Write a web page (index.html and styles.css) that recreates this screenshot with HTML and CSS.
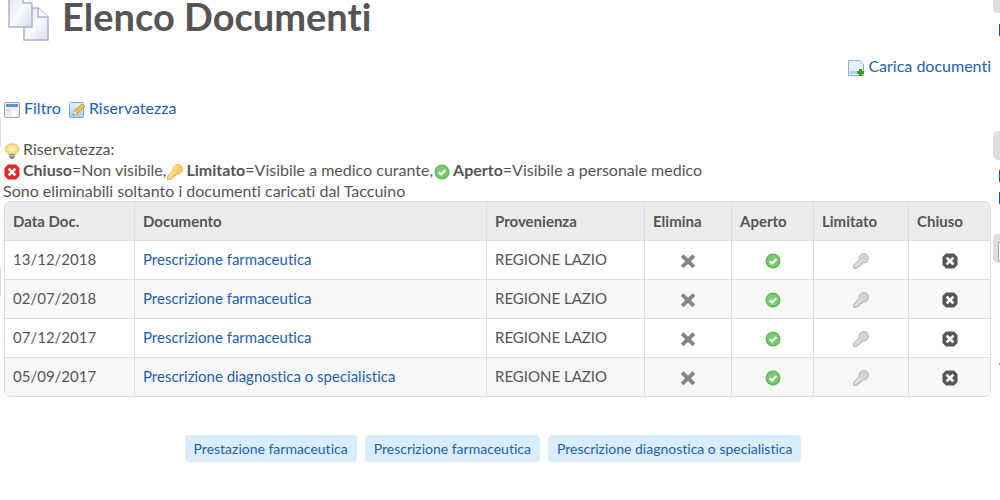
FILE: index.html
```html
<!DOCTYPE html>
<html lang="it">
<head>
  <meta charset="UTF-8">
  <title>Elenco Documenti</title>
  <meta name="viewport" content="width=device-width, initial-scale=1.0">
  <link rel="stylesheet" href="styles.css">
</head>
<body>
  <!-- Icons -->
  <svg class="sprite" aria-hidden="true">
    <defs>
      <linearGradient id="paper" x1="0" y1="0" x2="1" y2="1">
        <stop offset="0" stop-color="#dcdff0"/>
        <stop offset="0.5" stop-color="#fafbff"/>
        <stop offset="1" stop-color="#d6d9ec"/>
      </linearGradient>
      <linearGradient id="sheet" x1="0" y1="0" x2="0" y2="1">
        <stop offset="0" stop-color="#e6f3fd"/>
        <stop offset="1" stop-color="#9fcdf2"/>
      </linearGradient>
      <linearGradient id="gold" x1="0" y1="0" x2="1" y2="1">
        <stop offset="0" stop-color="#fff0a8"/>
        <stop offset="1" stop-color="#f2b632"/>
      </linearGradient>
      <radialGradient id="glow">
        <stop offset="0" stop-color="#fffbd8"/>
        <stop offset="1" stop-color="#f6ce5c"/>
      </radialGradient>
    </defs>
    <symbol id="i-ok" viewBox="0 0 16 16">
      <circle cx="8" cy="8" r="7.5" fill="#5eb956"/>
      <circle cx="8" cy="8" r="6" fill="#7cca73"/>
      <path d="M4.8 8.2l2.3 2.2 4.2-4.3" fill="none" stroke="#fff" stroke-width="2.2"/>
    </symbol>
    <symbol id="i-stop" viewBox="0 0 16 16">
      <path d="M4 .5h8L15.500 4v8L12 15.500H4L.5 12V4z" fill="currentColor"/>
      <path d="M5.500 5.500l5 5M10.500 5.500l-5 5" stroke="#fff" stroke-width="2.600" stroke-linecap="square"/>
    </symbol>
    <symbol id="i-cross" viewBox="0 0 16 16">
      <path d="M3.500 4l9 8.500M12.500 4l-9 8.500" stroke="#858585" stroke-width="3.800" stroke-linecap="square"/>
    </symbol>
    <symbol id="i-key" viewBox="0 0 18 18">
      <path d="M7 7.500C6 4 8.500.8 12 .7c4-.2 6.300 3.500 5.200 6.600-1 2.900-3.700 4.500-6.700 3.700L10 13l-2 .3-.7 2-1.800.2-.7 1.500-4 .5-.3-3.700z" stroke="currentColor" stroke-width="1"/>
      <circle cx="13.200" cy="4.600" r="1.200" fill="#fff" stroke="currentColor" stroke-width=".7"/>
      <path d="M3 14.500l6-5.500" stroke="#fff" stroke-opacity=".6"/>
    </symbol>
  </svg>

  <div class="page">
    <div class="edge edge-left">
      <span class="tab"></span>
      <span class="tab"></span>
    </div>

    <main class="content">
      <header class="title">
        <svg width="48" height="42" viewBox="0 6 48 42" aria-hidden="true">
          <g fill="url(#paper)" stroke="#b0b1cf" stroke-width="1.500">
            <path d="M18 14h14l10 9v23H18z"/>
            <path d="M32 14v9h10" fill="#fff"/>
            <path d="M3 1h14l9 9v23H3z"/>
            <path d="M17 1v8h9" fill="#fff"/>
          </g>
        </svg>
        <h1>Elenco Documenti</h1>
      </header>

      <div class="upload">
        <a href="#"><svg class="icon" viewBox="0 0 16 16" aria-hidden="true">
          <path d="M.5 .5h11l4 4v11H.5z" fill="#e3eff9" stroke="#8fb0d0"/>
          <path d="M2 11h12v3H2z" fill="#a9d4f5"/>
          <path d="M12.500 9v7M9 12.500h7" stroke="#3f9c22" stroke-width="3"/>
        </svg>Carica documenti</a>
      </div>

      <nav class="tools">
        <a href="#"><svg class="icon" viewBox="0 0 16 16" aria-hidden="true">
          <rect x=".5" y=".5" width="15" height="15" rx="1.500" fill="#eee" stroke="#a6a6a6"/>
          <path d="M2 2h12v3H2z" fill="#5b92c9"/>
          <path d="M2 7h4v2H2z" fill="#d2d2d2"/>
          <rect x="8" y="9" width="5" height="5" fill="#fff"/>
        </svg>Filtro</a>
        <a href="#"><svg class="icon" viewBox="0 0 16 16" aria-hidden="true">
          <rect x=".5" y=".5" width="14" height="15" rx="1" fill="url(#sheet)" stroke="#76a9dc"/>
          <path d="M4 13l1-4 8-7 3 2.500-8 7.500z" fill="#f5bd48" stroke="#b98a36" stroke-width=".7"/>
          <path d="M4 13l1-4 3 3z" fill="#fff0d0"/>
          <path d="M4 13l.5-1.500 1 1z" fill="#444"/>
        </svg>Riservatezza</a>
      </nav>

      <div class="legend">
        <div><svg class="icon" viewBox="0 0 16 16" aria-hidden="true">
          <path d="M8 .5a7 5.500 0 0 1 7 5.500c0 3-3 4-4 6H5c-1-2-4-3-4-6A7 5.500 0 0 1 8 .5z" fill="url(#glow)" stroke="#e2bd66" stroke-width=".6"/>
          <path d="M5 11h6v3l-2 2H7l-2-2z" fill="#8b8b8b"/>
          <path d="M5 12.500h6" stroke="#ccc"/>
        </svg>Riservatezza:</div>
        <div><svg class="icon red" aria-hidden="true"><use href="#i-stop"/></svg><strong>Chiuso</strong>=Non visibile,<svg class="icon key" aria-hidden="true"><use href="#i-key"/></svg><strong>Limitato</strong>=Visibile a medico curante,<svg class="icon" aria-hidden="true"><use href="#i-ok"/></svg><strong>Aperto</strong>=Visibile a personale medico</div>
        <div>Sono eliminabili soltanto i documenti caricati dal Taccuino</div>
      </div>

      <table class="docs">
        <colgroup>
          <col class="c-date"><col><col class="c-from"><col class="c-del"><col class="c-open"><col class="c-lim"><col class="c-closed">
        </colgroup>
        <thead>
          <tr><th>Data Doc.</th><th>Documento</th><th>Provenienza</th><th>Elimina</th><th>Aperto</th><th>Limitato</th><th>Chiuso</th></tr>
        </thead>
        <tbody>
          <tr>
            <td>13/12/2018</td>
            <td><a href="#">Prescrizione farmaceutica</a></td>
            <td>REGIONE LAZIO</td>
            <td class="act"><button aria-label="Elimina"><svg><use href="#i-cross"/></svg></button></td>
            <td class="act"><button aria-label="Aperto"><svg><use href="#i-ok"/></svg></button></td>
            <td class="act"><button class="off-key" aria-label="Limitato"><svg><use href="#i-key"/></svg></button></td>
            <td class="act"><button aria-label="Chiuso"><svg><use href="#i-stop"/></svg></button></td>
          </tr>
          <tr>
            <td>02/07/2018</td>
            <td><a href="#">Prescrizione farmaceutica</a></td>
            <td>REGIONE LAZIO</td>
            <td class="act"><button aria-label="Elimina"><svg><use href="#i-cross"/></svg></button></td>
            <td class="act"><button aria-label="Aperto"><svg><use href="#i-ok"/></svg></button></td>
            <td class="act"><button class="off-key" aria-label="Limitato"><svg><use href="#i-key"/></svg></button></td>
            <td class="act"><button aria-label="Chiuso"><svg><use href="#i-stop"/></svg></button></td>
          </tr>
          <tr>
            <td>07/12/2017</td>
            <td><a href="#">Prescrizione farmaceutica</a></td>
            <td>REGIONE LAZIO</td>
            <td class="act"><button aria-label="Elimina"><svg><use href="#i-cross"/></svg></button></td>
            <td class="act"><button aria-label="Aperto"><svg><use href="#i-ok"/></svg></button></td>
            <td class="act"><button class="off-key" aria-label="Limitato"><svg><use href="#i-key"/></svg></button></td>
            <td class="act"><button aria-label="Chiuso"><svg><use href="#i-stop"/></svg></button></td>
          </tr>
          <tr>
            <td>05/09/2017</td>
            <td><a href="#">Prescrizione diagnostica o specialistica</a></td>
            <td>REGIONE LAZIO</td>
            <td class="act"><button aria-label="Elimina"><svg><use href="#i-cross"/></svg></button></td>
            <td class="act"><button aria-label="Aperto"><svg><use href="#i-ok"/></svg></button></td>
            <td class="act"><button class="off-key" aria-label="Limitato"><svg><use href="#i-key"/></svg></button></td>
            <td class="act"><button aria-label="Chiuso"><svg><use href="#i-stop"/></svg></button></td>
          </tr>
        </tbody>
      </table>

      <div class="tags">
        <a href="#">Prestazione farmaceutica</a>
        <a href="#">Prescrizione farmaceutica</a>
        <a href="#">Prescrizione diagnostica o specialistica</a>
      </div>
    </main>

    <!-- side panel, only its edge shows -->
    <div class="edge edge-right">
      <span class="tab tab-top"></span>
      <span class="mark"></span>
      <span class="tab"></span>
      <span class="mark"></span>
      <span class="mark"></span>
      <span class="tab tab-box"></span>
      <span class="dot"></span>
    </div>
  </div>
</body>
</html>
```
FILE: styles.css
```css
* {
  box-sizing: border-box;
}
body {
  margin: 0;
  background: #fff;
  color: #555;
  font-family: Lato, "Liberation Sans", sans-serif;
  font-size: 16px;
  line-height: 21px;
  font-variant-ligatures: none;
}
a {
  color: #1b62ae;
  text-decoration: none;
}
a:hover {
  text-decoration: underline;
}
.sprite {
  position: absolute;
  width: 0;
  height: 0;
}
.page {
  display: grid;
  grid-template-columns: 3px minmax(0, 1fr) 9px;
  overflow: hidden;
}

/* Cut off side panels */
.edge {
  display: flex;
  flex-direction: column;
}
.edge-left {
  padding-top: 118px;
  gap: 120px;
}
.tab {
  height: 29px;
  background: #ddd;
}
.edge-left .tab {
  width: 1px;
}
.edge-right {
  padding-left: 2px;
}
.edge-right .tab {
  flex: none;
  width: 12px;
  border-radius: 5px;
}
.edge-right .tab-top {
  height: 13px;
  margin-bottom: 11px;
  border-radius: 0 0 0 5px;
}
.mark {
  width: 2px;
  height: 12px;
  margin-left: 6px;
  background: #17589f;
}
.mark + .tab {
  margin-top: 95px;
}
.tab + .mark {
  margin-top: 10px;
}
.tab-top + .mark {
  margin-top: 0;
}
.mark + .mark {
  margin-top: 10px;
}
.mark + .tab-box {
  margin-top: 30px;
}
.tab-box::after {
  content: "";
  display: block;
  width: 10px;
  height: 17px;
  margin: 8px 0 0 5px;
  background: #fff;
  border: 1px solid #aaa;
}
.dot {
  width: 1px;
  height: 2px;
  margin: 100px 0 0 6px;
  background: #999;
}

.title {
  display: flex;
  gap: 8px;
  height: 42px;
  padding-left: 3px;
}
.title svg {
  flex: none;
}
h1 {
  margin: 0;
  font-size: 38px;
  line-height: 33px;
  font-weight: bold;
}
.icon {
  width: 16px;
  height: 16px;
  margin: 0 4px 0 1px;
  vertical-align: -4px;
}
.upload {
  margin-top: 13px;
  text-align: right;
}
.tools {
  display: flex;
  gap: 7px;
  margin-top: 21px;
}
.legend {
  margin-top: 20px;
}
.legend .icon {
  margin-right: 3px;
}
.red {
  color: #e52525;
}
.key {
  color: #e0a640;
  fill: url(#gold);
}

/* Documents table */
.docs {
  width: calc(100% - 1px);
  margin-left: 1px;
  table-layout: fixed;
  border-collapse: separate;
  border-spacing: 0;
  border: 1px solid #ddd;
  border-radius: 6px;
  overflow: hidden;
  font-size: 15px;
}
.c-date { width: 129px; }
.c-from { width: 158px; }
.c-del { width: 87px; }
.c-open { width: 82px; }
.c-lim { width: 95px; }
.c-closed { width: 82px; }
.docs th,
.docs td {
  height: 39px;
  padding: 0 8px 2px;
  border-left: 1px solid #ddd;
  border-top: 1px solid #ddd;
  text-align: left;
  white-space: nowrap;
}
.docs th {
  height: 38px;
  padding-bottom: 0;
  border-top: none;
  background: #ececec;
}
.docs th:first-child,
.docs td:first-child {
  border-left: none;
}
.docs .act {
  padding: 2px 8px 0;
}
.docs tbody tr:nth-child(even) {
  background: #f7f7f7;
}
.docs button {
  display: block;
  width: 16px;
  height: 16px;
  margin: 0 auto;
  padding: 0;
  border: none;
  background: none;
  color: #555;
  cursor: pointer;
}
.docs button svg {
  display: block;
  width: 16px;
  height: 16px;
}
.docs .off-key {
  color: #aaa;
  fill: #d6d6d6;
}

.tags {
  display: flex;
  flex-wrap: wrap;
  justify-content: center;
  gap: 8px;
  margin: 38px 8px 20px 0;
  font-size: 14px;
}
.tags a {
  padding: 3px 9px;
  border-radius: 4px;
  background: #d9edfd;
}
```
